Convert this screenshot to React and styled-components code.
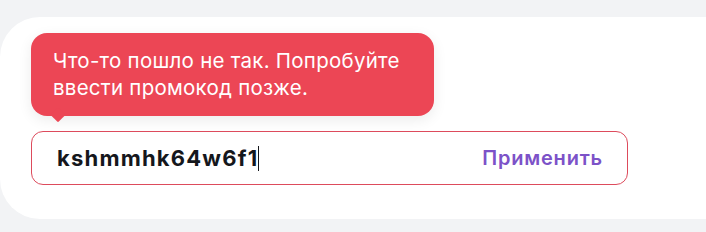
import { styled, createGlobalStyle } from "styled-components";

const GlobalStyle = createGlobalStyle`
  html, body {
    margin: 0;
    padding: 0;
    background: #f2f3f5;
    font-family: "Inter", "Open Sans", sans-serif;
  }
`;

const Page = styled.div`
  width: 706px;
  height: 232px;
  padding-top: 17px;
  box-sizing: border-box;
  overflow: hidden;
`;

const Card = styled.div`
  width: 740px;
  height: 202px;
  background: #fff;
  border-radius: 40px 0 0 40px;
  padding: 16px 0 0 31px;
  box-sizing: border-box;
  display: flex;
  flex-direction: column;
`;

const Tooltip = styled.div`
  position: relative;
  width: 403px;
  height: 83px;
  box-sizing: border-box;
  background: #ec4655;
  border-radius: 16px;
  padding: 14px 10px 0 22px;
  color: #fff;
  font-size: 20.5px;
  line-height: 27px;
  letter-spacing: 0.25px;
  white-space: nowrap;
  box-shadow: 0 4px 14px rgba(0, 0, 0, 0.08);

  &::after {
    content: "";
    position: absolute;
    left: 20px;
    bottom: -6px;
    width: 14px;
    height: 14px;
    background: #ec4655;
    border-radius: 2px;
    transform: rotate(45deg) scale(0.75, 0.75);
    transform-origin: center;
  }
`;

const Field = styled.div`
  margin-top: 15px;
  width: 597px;
  height: 54px;
  box-sizing: border-box;
  border: 1px solid #dd4b5c;
  border-radius: 12px;
  display: flex;
  align-items: center;
  justify-content: space-between;
  padding: 0 24px 0 25px;
`;

const Code = styled.div`
  font-size: 22px;
  font-weight: 700;
  color: #15171c;
  display: flex;
  align-items: center;
  letter-spacing: 1.2px;
`;

const Caret = styled.span`
  display: inline-block;
  width: 1px;
  height: 25px;
  background: #15171c;
`;

const Apply = styled.button`
  border: none;
  background: none;
  padding: 0;
  font-family: inherit;
  font-size: 20px;
  font-weight: 600;
  letter-spacing: 0.8px;
  color: #7c52c8;
  cursor: pointer;
`;

export default function App() {
  return (
    <>
      <GlobalStyle />
      <Page>
        <Card>
          <Tooltip>
            Что-то пошло не так. Попробуйте
            <br />
            ввести промокод позже.
          </Tooltip>
          <Field>
            <Code>
              kshmmhk64w6f1
              <Caret />
            </Code>
            <Apply>Применить</Apply>
          </Field>
        </Card>
      </Page>
    </>
  );
}
